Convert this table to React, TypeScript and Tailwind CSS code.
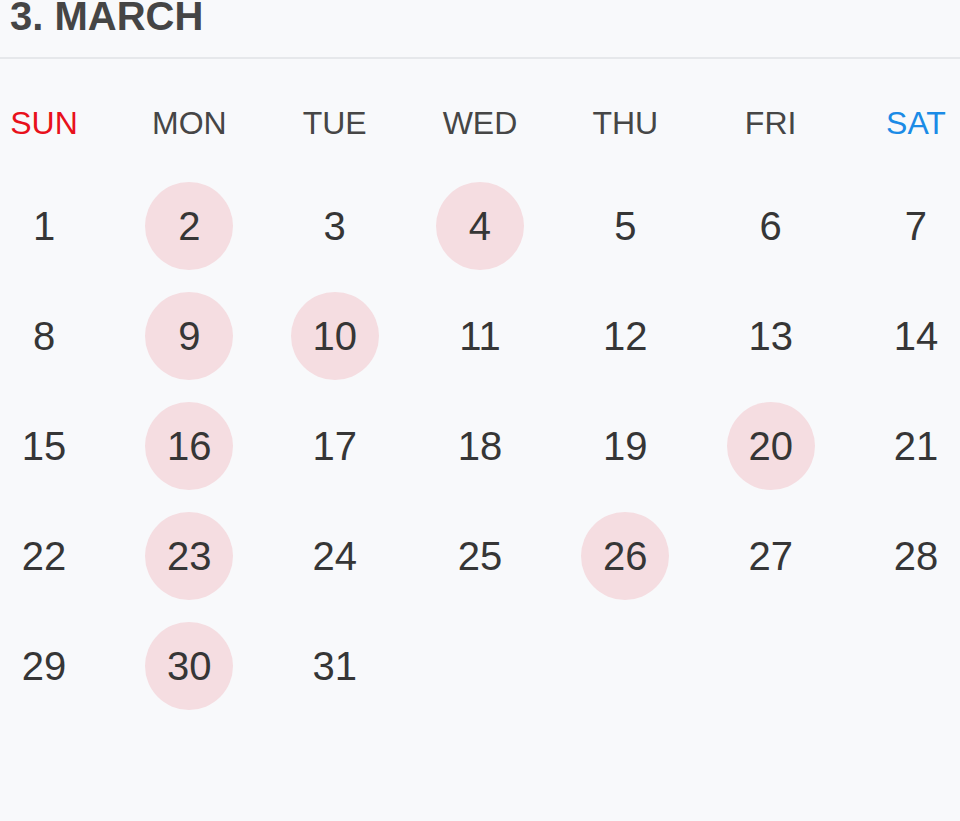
const DAYS = ["SUN", "MON", "TUE", "WED", "THU", "FRI", "SAT"];
const MARKED = [2, 4, 9, 10, 16, 20, 23, 26, 30];

const dayColor = (i: number) =>
  i === 0 ? "text-[#e8111b]" : i === 6 ? "text-[#1b8be6]" : "text-[#464646]";

export default function App() {
  // March starts on a Sunday, 31 days -> 5 weeks
  const weeks: (number | null)[][] = [];
  for (let w = 0; w < 5; w++) {
    const row: (number | null)[] = [];
    for (let d = 0; d < 7; d++) {
      const n = w * 7 + d + 1;
      row.push(n <= 31 ? n : null);
    }
    weeks.push(row);
  }

  return (
    <div className="min-h-screen bg-[#f8f9fb] font-['Liberation_Sans',Arial,sans-serif] overflow-hidden">
      <div className="h-[59px] flex items-start border-b-2 border-[#e6e8eb] pl-[10px]">
        <h1 className="text-[40px] leading-[32px] font-bold text-[#454545]">3. MARCH</h1>
      </div>

      <div className="mt-[48px] flex justify-between">
        {DAYS.map((d, i) => (
          <div key={d} className={`w-[88px] text-center text-[32px] leading-[32px] ${dayColor(i)}`}>
            {d}
          </div>
        ))}
      </div>

      <div className="mt-[43px] flex flex-col gap-[22px]">
        {weeks.map((row, wi) => (
          <div key={wi} className="flex justify-between">
            {row.map((n, di) => (
              <div
                key={di}
                className={`w-[88px] h-[88px] rounded-full flex items-center justify-center text-[40px] leading-[40px] text-[#363636] ${
                  n && MARKED.includes(n) ? "bg-[#f5dde1]" : ""
                }`}
              >
                {n ?? ""}
              </div>
            ))}
          </div>
        ))}
      </div>
    </div>
  );
}
